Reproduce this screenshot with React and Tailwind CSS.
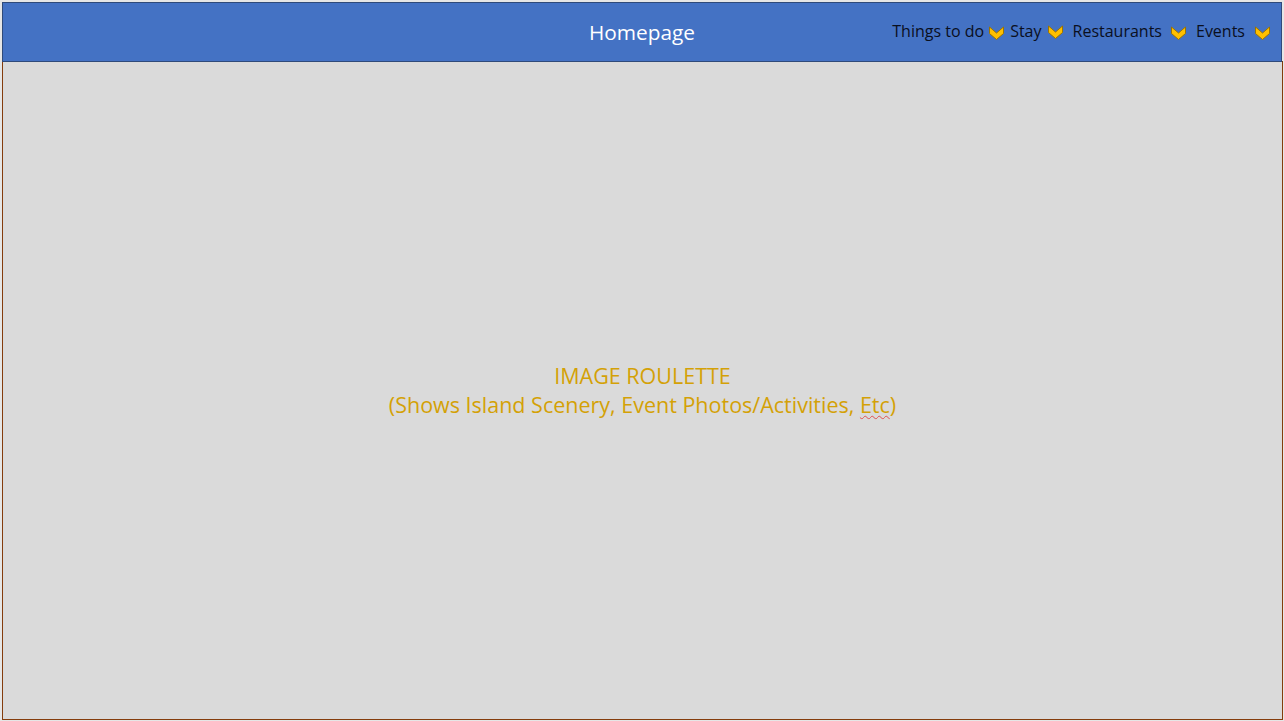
import React from "react";

function Chevron() {
  return (
    <svg width="17" height="16" viewBox="0 0 17 16" className="shrink-0 block">
      <polygon
        points="1.5,2 8.5,8 15.5,2 15.5,8.5 8.5,14.5 1.5,8.5"
        fill="#ffc000"
        stroke="#9c7400"
        strokeWidth="1"
        strokeLinejoin="round"
      />
    </svg>
  );
}

export default function App() {
  const font = { fontFamily: '"Open Sans", "Noto Sans", sans-serif' };
  return (
    <div className="w-[1284px] h-[721px] bg-[#e6e6e6] pt-[2px] pl-[2px] overflow-hidden" style={font}>
      <div className="w-[1280px] h-[60px] bg-[#4472c4] border border-[#2f4a7a] relative flex items-center">
        <div className="absolute inset-0 flex items-center justify-center">
          <span className="text-white text-[20.8px] leading-none mt-[1px]">Homepage</span>
        </div>
        <div className="ml-auto mr-[10px] flex items-center text-[16px] text-[#0a0f1e] leading-none -mt-[2px] relative">
          <span>Things to do</span>
          <span className="ml-[4px] mt-[3px]"><Chevron /></span>
          <span className="ml-[5px]">Stay</span>
          <span className="ml-[5px] mt-[1px]"><Chevron /></span>
          <span className="ml-[9px]">Restaurants</span>
          <span className="ml-[8px] mt-[3px]"><Chevron /></span>
          <span className="ml-[9px]">Events</span>
          <span className="ml-[9px] mt-[3px]"><Chevron /></span>
        </div>
      </div>
      <div className="w-[1281px] h-[659px] bg-[#dadada] border border-[#843c0c] border-t-[#5a3a1a] -mt-[1px] flex items-center justify-center">
        <div className="text-center text-[#d4a106] text-[21.5px] leading-[29px] -mt-[2px]">
          <div>IMAGE ROULETTE</div>
          <div>
            (Shows Island Scenery, Event Photos/Activities,{" "}
            <span className="underline decoration-wavy decoration-[#e05050] decoration-1 underline-offset-2">Etc</span>)
          </div>
        </div>
      </div>
    </div>
  );
}
